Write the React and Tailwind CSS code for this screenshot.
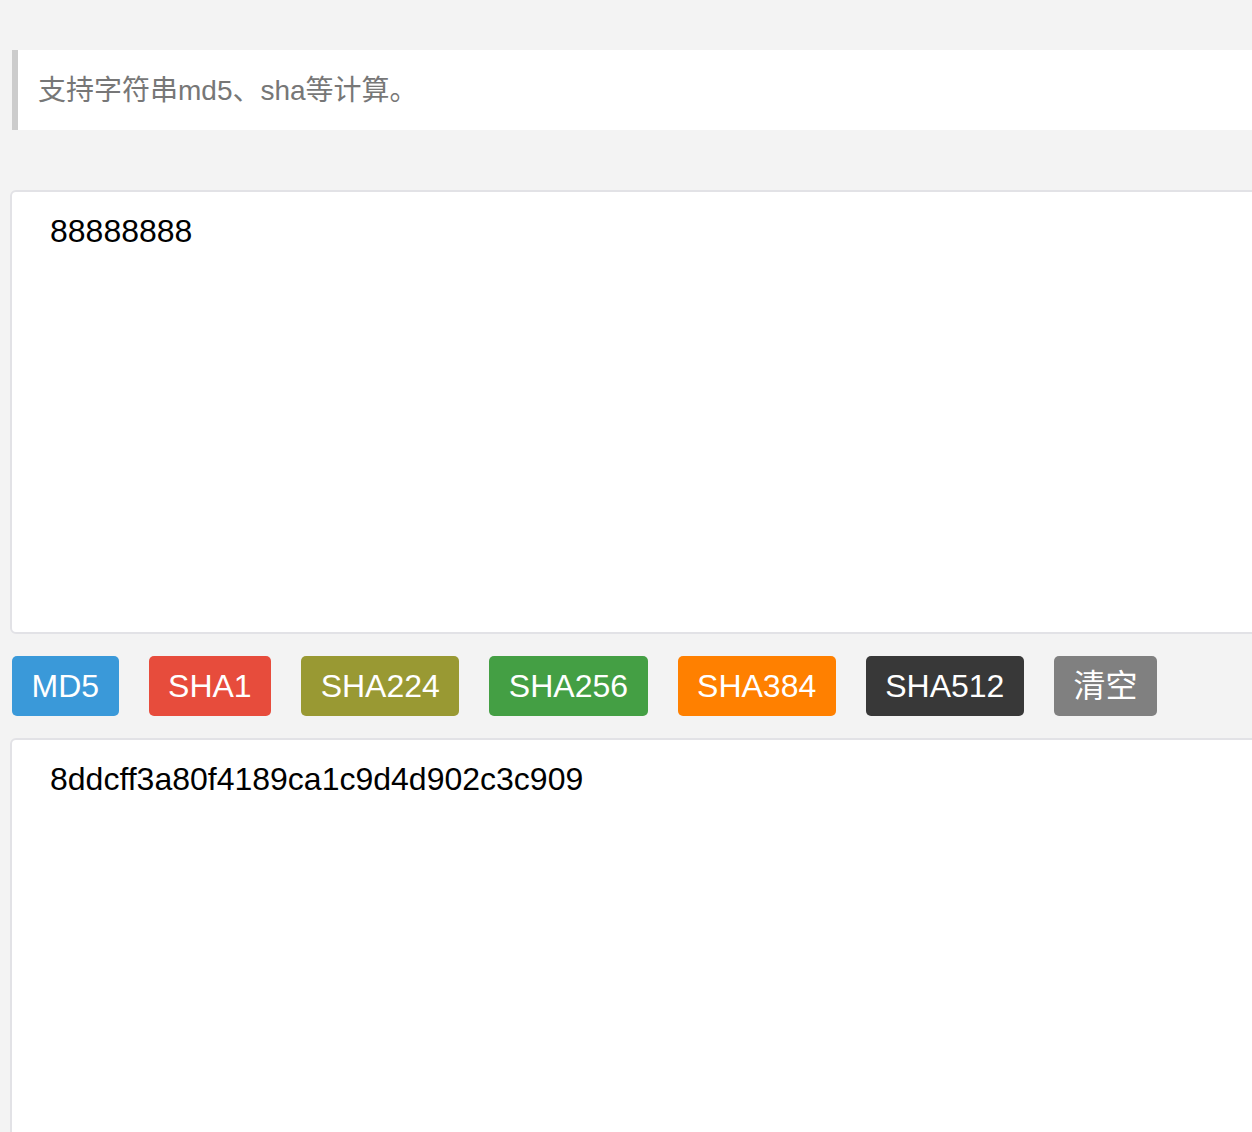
import { useState } from "react";

const FONT =
  "font-['Liberation_Sans','Noto_Sans_CJK_SC',sans-serif]";

const BUTTONS = [
  { label: "MD5", cls: "bg-[#3a99d9]" },
  { label: "SHA1", cls: "bg-[#e74c3c]" },
  { label: "SHA224", cls: "bg-[#999933]" },
  { label: "SHA256", cls: "bg-[#449f44]" },
  { label: "SHA384", cls: "bg-[#ff8000]" },
  { label: "SHA512", cls: "bg-[#383838]" },
  { label: "清空", cls: "bg-[#808080]" },
];

export default function App() {
  const [input, setInput] = useState("88888888");
  const [output, setOutput] = useState(
    "8ddcff3a80f4189ca1c9d4d902c3c909"
  );

  return (
    <div
      className={`min-h-[1132px] w-full overflow-hidden bg-[#f3f3f3] pt-[50px] ${FONT}`}
    >
      {/* Tip */}
      <div className="ml-[12px] flex h-[80px] w-[1300px] items-center border-l-[6px] border-[#cccccc] bg-white pl-[20px]">
        <p className="pt-[2px] text-[28px] text-[#777777]">
          支持字符串md5、sha等计算。
        </p>
      </div>

      {/* Input */}
      <textarea
        value={input}
        onChange={(e) => setInput(e.target.value)}
        className="mt-[60px] ml-[10px] block h-[444px] w-[1300px] resize-none rounded-[6px] border-2 border-[#e2e2e6] bg-white pt-[21px] pl-[38px] text-[32px] leading-[1.15] text-black outline-none"
      />

      {/* Actions */}
      <div className="mt-[22px] ml-[12px] flex gap-[30px]">
        {BUTTONS.map((b) => (
          <button
            key={b.label}
            type="button"
            onClick={() => {
              if (b.label === "清空") {
                setInput("");
                setOutput("");
              }
            }}
            className={`h-[60px] rounded-[5px] px-[19.5px] text-[32px] leading-none text-white ${b.cls}`}
          >
            {b.label}
          </button>
        ))}
      </div>

      {/* Output */}
      <textarea
        value={output}
        readOnly
        className="mt-[22px] ml-[10px] block h-[444px] w-[1300px] resize-none rounded-[6px] border-2 border-[#e2e2e6] bg-white pt-[21px] pl-[38px] text-[32px] leading-[1.15] text-black outline-none"
      />
    </div>
  );
}
